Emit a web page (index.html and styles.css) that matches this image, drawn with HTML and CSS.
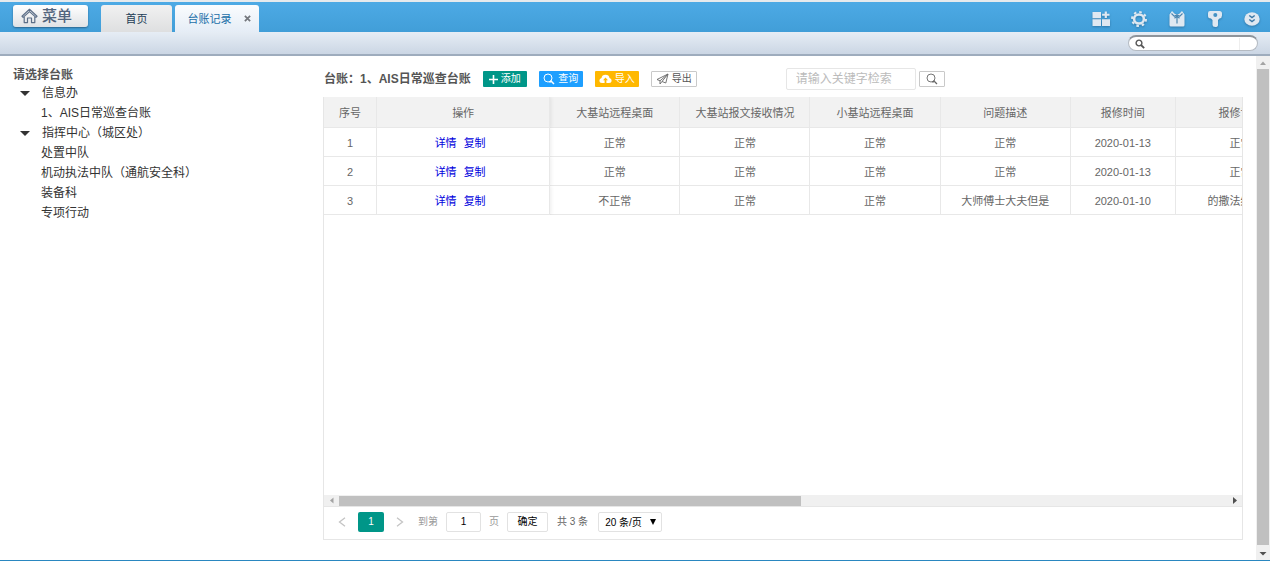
FILE: index.html
```html
<!DOCTYPE html>
<html lang="zh-CN">
<head>
<meta charset="utf-8">
<title>台账记录</title>
<link rel="stylesheet" href="styles.css">
</head>
<body>
<header class="topbar">
  <button class="menu-btn" type="button">
    <svg width="17" height="16" viewBox="0 0 17 16" fill="none" stroke="#5d6f88" stroke-width="1.2" stroke-linejoin="round"><path d="M1 8.300 8.500 1.300l7.500 7-1.100 1.100L8.500 3.600 2.100 9.400z"/><path d="M3.200 9v5.600h3.300V10h4v4.600h3.300V9"/></svg>
    <span>菜单</span>
  </button>
  <nav class="tabs">
    <button class="tab" type="button">首页</button>
    <div class="tab tab-active"><a href="#record">台账记录</a><button class="tab-close" type="button" aria-label="关闭">
      <svg width="7" height="7" viewBox="0 0 8 8" stroke="#74777d" stroke-width="2"><path d="M1 1l6 6M7 1 1 7"/></svg></button></div>
  </nav>
  <div class="tools">
    <button type="button" aria-label="应用"><svg width="18" height="18" viewBox="0 0 18 18" fill="#dfe8f1"><path d="M.5 2H9v6.300H.5zM.5 9.300H9V16H.5zM10 9.300h8V16h-8zM12.700 1.500h2.200v2.300h2.600v2h-2.600v2.300h-2.200V5.800h-2.600v-2h2.600z"/></svg></button>
    <button type="button" aria-label="设置"><svg width="18" height="18" viewBox="0 0 18 18" fill="none" stroke="#dfe8f1"><ellipse cx="9" cy="9" rx="4.900" ry="4.500" stroke-width="2.600"/><circle cx="9" cy="9" r="7" stroke-width="2" stroke-dasharray="2.600 2.898"/></svg></button>
    <button type="button" aria-label="换肤"><svg width="18" height="18" viewBox="0 0 18 18"><path d="M1.500 4.500 4 1l3 3h4l3-3 2.500 3.500V15q0 1.500-1.500 1.500H3Q1.500 16.500 1.500 15z" fill="#dfe8f1"/><path d="M3.500 3.500 6.300 6.300 9 4.800l2.700 1.500 2.800-2.800M9 6v7.500M6.500 8.300 9 6l2.500 2.300" fill="none" stroke="#4b86b0" stroke-width="1.200"/></svg></button>
    <button type="button" aria-label="密码"><svg width="18" height="18" viewBox="0 0 18 18"><path d="M4 1h9.500q2.500 0 2.500 2.500v2Q16 8 13.500 8.500L12 10v5q0 2-2.800 2-2.700 0-2.700-2v-5L5 8.500Q2 8.500 2 6V3q0-2 2-2z" fill="#dfe8f1"/><circle cx="9.300" cy="4.900" r="2" fill="#4391c4"/></svg></button>
    <button type="button" aria-label="更多"><svg width="16" height="16" viewBox="0 0 16 16"><ellipse cx="8" cy="8" rx="7.700" ry="6.800" fill="#dfe8f1"/><path d="M5.300 4.500 8 6.500l2.700-2M5.300 8.500 8 10.500l2.700-2" fill="none" stroke="#3977a5" stroke-width="1.500"/></svg></button>
  </div>
</header>
<div class="subbar">
  <label class="quick">
    <svg width="10" height="10" viewBox="0 0 10 10" fill="none" stroke="#555"><circle cx="4" cy="4" r="2.900" stroke-width="1.400"/><path d="M6 6l3.200 3.200" stroke-width="1.800"/></svg>
    <input type="text" aria-label="快速搜索">
  </label>
</div>
<div class="workspace">
  <aside class="sidebar">
    <h2>请选择台账</h2>
    <ul class="tree">
      <li class="branch">信息办</li>
      <li>1、AIS日常巡查台账</li>
      <li class="branch">指挥中心（城区处）</li>
      <li>处置中队</li>
      <li>机动执法中队（通航安全科）</li>
      <li>装备科</li>
      <li>专项行动</li>
    </ul>
  </aside>
  <main class="content">
    <div class="toolbar">
      <h1>台账：1、AIS日常巡查台账</h1>
      <div class="actions">
        <button class="btn add" type="button"><svg width="9" height="9" viewBox="0 0 9 9" stroke="#fff" stroke-width="1.600"><path d="M4.500 0v9M0 4.500h9"/></svg>添加</button>
        <button class="btn query" type="button"><svg width="12" height="12" viewBox="0 0 12 12" fill="none" stroke="#fff"><circle cx="5" cy="5" r="4"/><path d="M6.500 9.500 8.500 7.500M8.500 8.500l2.500 2.500" stroke-width="1.500"/></svg>查询</button>
        <button class="btn import" type="button"><svg width="13" height="10" viewBox="0 0 13 10"><path d="M3 9Q.4 9 .4 6.500.4 4.500 2.500 4 3 .8 6.500.8T10.500 4q2.100.5 2.100 2.500Q12.600 9 10 9z" fill="#fff"/><path d="M6.500 3.500 9 6.300H7.400V9H5.600V6.300H4z" fill="#ffb800"/></svg>导入</button>
        <button class="btn plain" type="button"><svg width="13" height="12" viewBox="0 0 13 12" fill="none" stroke="#666" stroke-width=".9" stroke-linejoin="round"><path d="M12 1 1 6.500l3 1.300L12 1 9.800 10 6 8.500M4 7.800V11l2-2.500L12 1"/></svg>导出</button>
      </div>
      <form class="search">
        <input type="text" placeholder="请输入关键字检索" aria-label="请输入关键字检索">
        <button class="btn plain" type="button" aria-label="检索"><svg width="12" height="12" viewBox="0 0 12 12" fill="none" stroke="#666"><circle cx="5" cy="5" r="4" stroke-width=".9"/><path d="M6.500 9.500 8.500 7.500M8.500 8.500l2.500 2.500" stroke-width="1.300"/></svg></button>
      </form>
    </div>
    <section class="grid">
      <div class="grid-view">
        <table>
          <colgroup><col class="c-no"><col class="c-op"><col class="c"><col class="c"><col class="c"><col class="c"><col class="c-date"><col class="c"></colgroup>
          <thead><tr><th>序号</th><th class="edge">操作</th><th>大基站远程桌面</th><th>大基站报文接收情况</th><th>小基站远程桌面</th><th>问题描述</th><th>报修时间</th><th>报修记录</th></tr></thead>
          <tbody>
            <tr><td>1</td><td class="edge links"><a href="#d1">详情</a><a href="#c1">复制</a></td><td>正常</td><td>正常</td><td>正常</td><td>正常</td><td>2020-01-13</td><td>正常</td></tr>
            <tr><td>2</td><td class="edge links"><a href="#d2">详情</a><a href="#c2">复制</a></td><td>正常</td><td>正常</td><td>正常</td><td>正常</td><td>2020-01-13</td><td>正常</td></tr>
            <tr><td>3</td><td class="edge links"><a href="#d3">详情</a><a href="#c3">复制</a></td><td>不正常</td><td>正常</td><td>正常</td><td>大师傅士大夫但是</td><td>2020-01-10</td><td>的撒法给对方</td></tr>
          </tbody>
        </table>
      </div>
      <div class="hbar" aria-hidden="true">
        <svg width="15" height="11" viewBox="0 0 15 11"><path d="M9.500 2.500v6L6 5.500z" fill="#a3a3a3"/></svg>
        <div class="hbar-track"><div class="hbar-thumb"></div></div>
        <svg width="15" height="11" viewBox="0 0 15 11"><path d="M6 2v7l4-3.500z" fill="#505050"/></svg>
      </div>
      <div class="pager">
        <button class="arrow" type="button" aria-label="上一页"><svg width="8" height="10" viewBox="0 0 8 10" fill="none" stroke="#c4c4c4" stroke-width="1.300"><path d="M7 .8 1.500 5 7 9.200"/></svg></button>
        <button class="current" type="button">1</button>
        <button class="arrow" type="button" aria-label="下一页"><svg width="8" height="10" viewBox="0 0 8 10" fill="none" stroke="#c4c4c4" stroke-width="1.300"><path d="M1 .8 6.500 5 1 9.200"/></svg></button>
        <label class="jump">到第<input type="text" value="1">页</label>
        <button class="confirm" type="button">确定</button>
        <span class="total">共 3 条</span>
        <select aria-label="每页条数"><option>20 条/页</option></select>
      </div>
    </section>
  </main>
  <div class="vbar" aria-hidden="true">
    <svg width="14" height="13" viewBox="0 0 14 13"><path d="M4 9h6L7 5.500z" fill="#a3a3a3"/></svg>
    <div class="vbar-thumb"></div>
    <svg width="14" height="15" viewBox="0 0 14 15"><path d="M3.500 7h7L7 10.500z" fill="#505050"/></svg>
  </div>
</div>
</body>
</html>
```
FILE: styles.css
```css
* { box-sizing: border-box; }
body {
  margin: 0;
  height: 100vh;
  display: flex;
  flex-direction: column;
  overflow: hidden;
  border-bottom: 1px solid #2a87c0;
  background: #fff;
  color: #333;
  font: 12px/20px "Liberation Sans", "Noto Sans CJK SC", sans-serif;
}
button, input, select { font: inherit; color: inherit; margin: 0; padding: 0; }
button { display: inline-flex; align-items: center; justify-content: center; border: 0; background: none; white-space: nowrap; }
h1, h2, ul { margin: 0; padding: 0; font-size: 12px; }
svg { display: block; flex: none; }
a { text-decoration: none; }

.topbar {
  display: flex;
  flex: none;
  height: 32px;
  padding: 3px 10px 0 13px;
  border-top: 2px solid #e6eaed;
  background: linear-gradient(#4daae5, #419ed8);
}
.menu-btn {
  width: 75px;
  height: 22px;
  gap: 4px;
  padding-right: 8px;
  border-radius: 3px;
  background: linear-gradient(#fff, #e0e2e5);
  box-shadow: 0 1px 2px #2a648c;
  color: #53657d;
  font-size: 15px;
  font-weight: 500;
}
.tabs { display: flex; gap: 3px; margin-left: 13px; }
.tab {
  display: flex;
  align-items: center;
  justify-content: center;
  width: 71px;
  height: 27px;
  border-radius: 3px 3px 0 0;
  background: linear-gradient(#f1f1f1, #dedfe0);
  color: #1d3d55;
  font-size: 11px;
}
.tab-active { width: 84px; gap: 12px; padding-left: 4px; background: linear-gradient(#fafcfe, #e5edf6); }
.tab-active a { color: #1b6fa8; }
.tools { display: flex; align-items: center; gap: 20px; height: 28px; margin-left: auto; }
.tools svg { filter: drop-shadow(0 1px 1px #2f78a9); }
.subbar {
  display: flex;
  flex: none;
  align-items: center;
  justify-content: flex-end;
  height: 24px;
  padding-right: 12px;
  border-bottom: 2px solid #9eacbd;
  background: linear-gradient(#e6edf5, #cbd6e4);
}
.quick {
  display: flex;
  align-items: center;
  gap: 4px;
  width: 130px;
  height: 16px;
  padding: 0 17px 0 6px;
  border: 1px solid #b4bac2;
  border-top: 2px solid #8e949b;
  border-radius: 8px;
  background: #fff;
}
.quick input { flex: 1; min-width: 0; height: 12px; border: 0; border-right: 1px solid #eee; background: none; outline: 0; }

.workspace { display: flex; flex: 1; min-height: 0; }
.sidebar { flex: none; width: 323px; padding: 11px 13px; }
.sidebar h2 { line-height: 16px; color: #555; }
.tree { list-style: none; }
.tree li { padding-left: 28px; }
.tree .branch { display: flex; align-items: center; gap: 12px; padding-left: 7px; }
.tree .branch::before { content: ""; border: 5px solid transparent; border-top-color: #333; border-bottom: 0; }

.content { display: flex; flex: 1; min-width: 0; flex-direction: column; padding: 12px 13px 20px 0; }
.toolbar { display: flex; align-items: center; height: 22px; margin-bottom: 7px; padding-left: 1px; white-space: nowrap; }
.toolbar h1 { color: #555; }
.actions { display: flex; gap: 12px; margin-left: 12px; }
.btn { height: 16px; width: 44px; gap: 3px; border-radius: 1px; color: #fff; font-size: 10px; }
.add { background: #009688; }
.query { background: #1e9fff; }
.import { background: #ffb800; }
.plain { width: 46px; border: 1px solid #c9c9c9; background: #fff; color: #555; }
.search { display: flex; align-items: center; gap: 3px; margin-left: 89px; }
.search input { width: 130px; height: 22px; padding: 0 9px; border: 1px solid #e6e6e6; border-radius: 2px; }
.search input::placeholder { color: #bbb; }
.search .btn { width: 26px; }

.grid { display: flex; flex: 1; min-height: 0; flex-direction: column; border: 1px solid #e6e6e6; border-top: 0; }
.grid-view { flex: 1; min-height: 0; overflow: hidden; }
table { width: 982px; table-layout: fixed; border-collapse: separate; border-spacing: 0; color: #666; font-size: 11px; }
.c-no { width: 53px; }
.c-op { width: 173px; }
.c { width: 130px; }
.c-date { width: 105px; }
th, td { height: 29px; padding: 1px 0 0; border: solid #e8e8e8; border-width: 0 1px 1px 0; text-align: center; font-weight: 400; white-space: nowrap; line-height: 16px; }
th { height: 31px; background: #f2f2f2; }
.edge { box-shadow: 1px 0 4px #00000014; clip-path: inset(0 -5px 0 0); }
.links { padding-right: 6px; }
td a { color: #00d; }
td a + a { margin-left: 7px; }

.hbar { display: flex; flex: none; align-items: center; height: 12px; border-bottom: 1px solid #e6e6e6; background: #f0f0f0; }
.hbar-track { flex: 1; }
.hbar-thumb { width: 52%; height: 10px; background: #c0c0c0; }
.vbar { display: flex; flex: none; flex-direction: column; width: 14px; padding: 0; background: #f0f0f0; }
.vbar-thumb { flex: 1; margin: 0 1px; background: #c0c0c0; }

.pager { display: flex; flex: none; align-items: center; height: 32px; padding: 0 0 2px 14px; color: #666; font-size: 10px; }
.arrow { width: 8px; height: 20px; }
.current { width: 26px; height: 20px; margin: 0 12px; border-radius: 2px; background: #009688; color: #fff; }
.jump { display: flex; align-items: center; margin-left: 14px; color: #999; }
.jump input { width: 35px; height: 20px; margin: 0 8px; border: 1px solid #e2e2e2; border-radius: 2px; text-align: center; color: #000; }
.confirm { width: 41px; height: 20px; margin: 0 9px 0 8px; border: 1px solid #e2e2e2; border-radius: 2px; color: #000; }
.pager select {
  width: 64px;
  height: 20px;
  margin-left: 10px;
  padding-left: 6px;
  border: 1px solid #e2e2e2;
  border-radius: 2px;
  appearance: none;
  color: #000;
  background: #fff url("data:image/svg+xml,%3Csvg xmlns='http://www.w3.org/2000/svg' width='6' height='6'%3E%3Cpath d='M0 0h6L3 6z'/%3E%3C/svg%3E") no-repeat right 5px center;
}
```
